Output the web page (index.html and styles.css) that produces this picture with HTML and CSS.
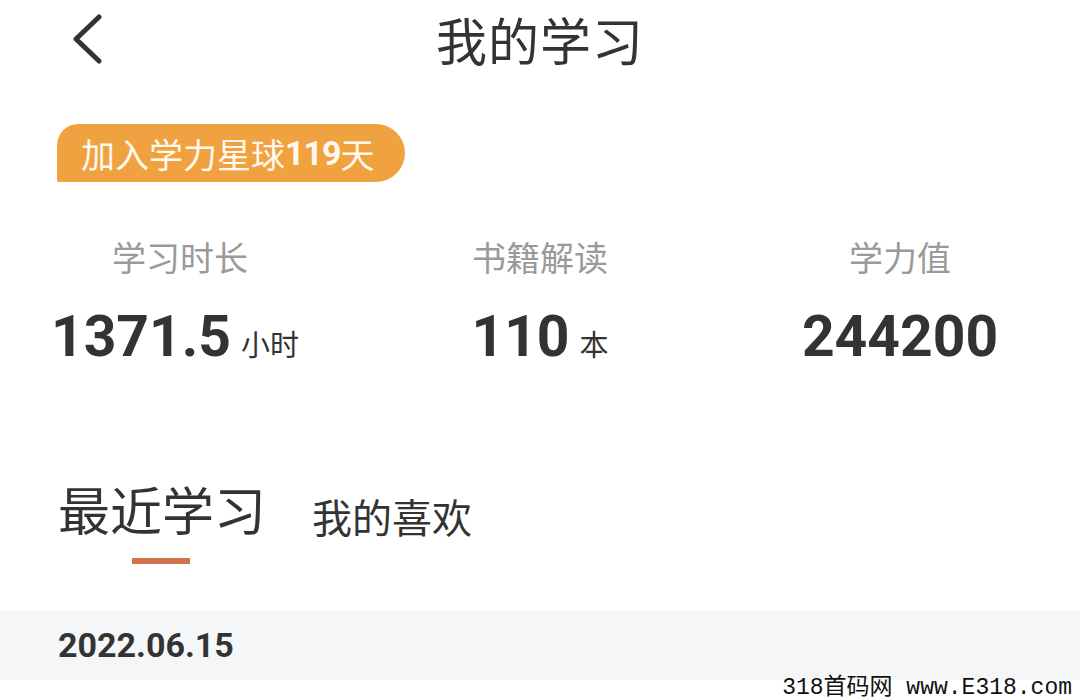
FILE: index.html
```html
<!DOCTYPE html>
<html lang="zh">
<head>
  <meta charset="UTF-8">
  <title>我的学习</title>
  <meta name="viewport" content="width=device-width, initial-scale=1.0">
  <link rel="stylesheet" href="styles.css">
</head>
<body>
  <header class="topbar">
    <a class="back" href="#">
      <svg width="34" height="50" viewBox="0 0 34 50"><path d="M29 3 L6 25 L29 47" fill="none" stroke="#333" stroke-width="5" stroke-linecap="round" stroke-linejoin="round"/></svg>
    </a>
    <h1>我的学习</h1>
  </header>

  <div class="badge">加入学力星球<b>119</b>天</div>

  <div class="stats">
    <div class="stat">
      <div class="label">学习时长</div>
      <div class="value">1371.5<span class="unit">小时</span></div>
    </div>
    <div class="stat">
      <div class="label">书籍解读</div>
      <div class="value">110<span class="unit">本</span></div>
    </div>
    <div class="stat">
      <div class="label">学力值</div>
      <div class="value">244200</div>
    </div>
  </div>

  <nav class="tabs">
    <a class="tab active" href="#">最近学习</a>
    <a class="tab" href="#">我的喜欢</a>
  </nav>

  <div class="date-row">2022.06.15</div>

  <div class="mark">318首码网 www.E318.com</div>
</body>
</html>
```

FILE: styles.css
```css
body {
  margin: 0;
  background: #fff;
  color: #333;
  font-family: Roboto, "Noto Sans CJK SC", sans-serif;
  width: 1080px;
  height: 700px;
  overflow: hidden;
  position: relative;
}

.topbar {
  height: 90px;
  display: flex;
  align-items: center;
  justify-content: center;
  position: relative;
}

.back {
  position: absolute;
  left: 70px;
  top: 14px;
}

.topbar h1 {
  margin: 0;
  margin-top: -12px;
  font-size: 51px;
  font-weight: 400;
  color: #333;
  letter-spacing: 1px;
}

.badge {
  display: inline-flex;
  align-items: center;
  margin: 34px 0 0 57px;
  height: 58px;
  padding: 0 30px 0 24px;
  background: #f1a240;
  color: #fff8ee;
  font-size: 34px;
  border-radius: 22px 30px 30px 2px;
}

.badge b {
  font-weight: 700;
  font-family: Roboto, sans-serif;
  letter-spacing: -1px;
}

.stats {
  display: flex;
  justify-content: space-between;
  margin-top: 54px;
}

.stat {
  width: 360px;
  display: flex;
  flex-direction: column;
  align-items: center;
}

.stat:first-child .value {
  margin-left: -10px;
}

.label {
  font-size: 34px;
  color: #9a9a9a;
  line-height: 46px;
}

.value {
  margin-top: 25px;
  font-size: 57px;
  font-weight: 700;
  color: #333;
  line-height: 60px;
  display: flex;
  align-items: baseline;
}

.unit {
  font-size: 29px;
  font-weight: 400;
  margin-left: 10px;
}

.tabs {
  display: flex;
  align-items: flex-end;
  gap: 46px;
  margin: 97px 0 0 58px;
  height: 76px;
}

.tab {
  color: #333;
  text-decoration: none;
  font-size: 40px;
  line-height: 58px;
  position: relative;
}

.tab.active {
  font-size: 52px;
  line-height: 70px;
}

.tab.active::after {
  content: "";
  position: absolute;
  left: 74px;
  bottom: -15px;
  width: 58px;
  height: 6px;
  background: #d5734c;
}

.date-row {
  margin-top: 61px;
  height: 70px;
  background: #f5f6f8;
  display: flex;
  align-items: center;
  padding-left: 58px;
  font-size: 34px;
  font-weight: 700;
  color: #333;
}

.mark {
  position: absolute;
  right: 8px;
  bottom: 0;
  font-family: "Liberation Mono", "Noto Sans CJK SC", monospace;
  font-size: 23px;
  color: #111;
  line-height: 24px;
}
```
